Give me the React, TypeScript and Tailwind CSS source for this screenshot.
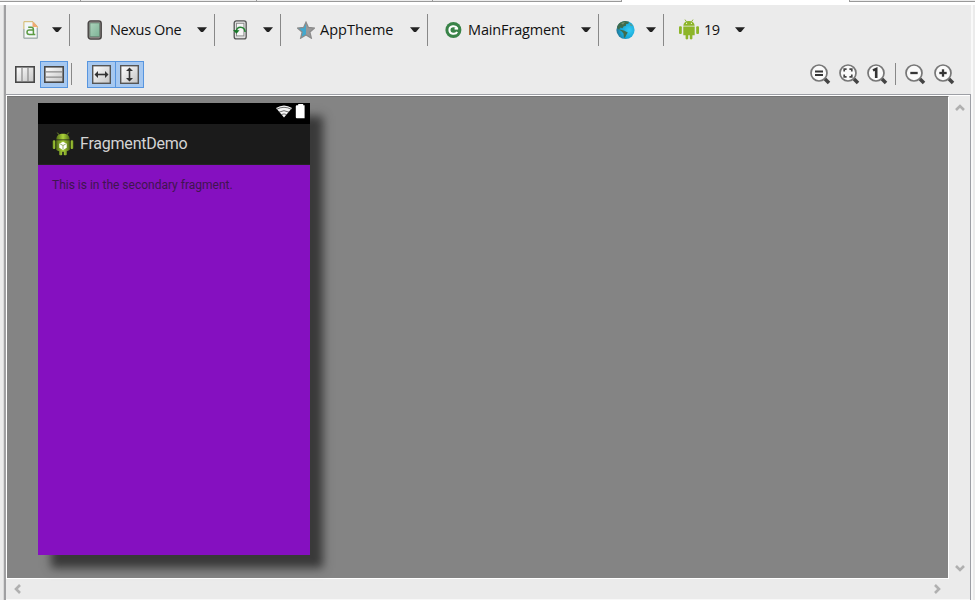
import type { ReactNode } from "react";

function Arrow() {
  return (
    <svg className="ml-auto block shrink-0" width="10" height="6" viewBox="0 0 10 6">
      <path d="M0 .3h10L6 5H4z" fill="#222" />
    </svg>
  );
}

function Cell({ icon, label, className }: { icon: ReactNode; label?: string; className: string }) {
  return (
    <div className={`flex h-8 shrink-0 items-center ${className}`}>
      <span className="shrink-0">{icon}</span>
      {label && <span className="whitespace-nowrap text-[14.5px] leading-5 text-[#111]">{label}</span>}
      <Arrow />
    </div>
  );
}

function FileIcon() {
  return (
    <svg className="block" width="16" height="20" viewBox="0 0 16 20">
      <path d="M.9 1.7H10l4.3 4.6v11.9H.9z" fill="#f2f7fa" stroke="#d3b768" />
      <path d="M.9 9v9.2h13.4V8" fill="none" stroke="#8eabc2" />
      <path d="M9.5 1.5 14.8 7H9.5z" fill="#f0a873" />
      <path d="M5.2 7.2h3q2.2 0 2.2 2.2v5.4M10.4 10.1H6.3q-2.3 0-2.3 2.2t2.3 2.2h6" fill="none" stroke="#5c9b42" strokeWidth="1.5" />
    </svg>
  );
}

function PhoneIcon() {
  return (
    <svg className="block" width="16" height="20" viewBox="0 0 16 20">
      <defs>
        <linearGradient id="screen" x2="1" y2="1">
          <stop stopColor="#add3bc" />
          <stop offset="1" stopColor="#7db496" />
        </linearGradient>
      </defs>
      <rect x="1.2" y=".9" width="13" height="18.2" rx="2.5" fill="#8b8583" stroke="#464342" strokeWidth="1.4" />
      <rect x="3" y="3" width="9.4" height="13.7" fill="url(#screen)" stroke="#628471" strokeWidth=".7" />
    </svg>
  );
}

function RotateIcon() {
  return (
    <svg className="block" width="16" height="20" viewBox="0 0 16 20">
      <rect x="2.2" y=".9" width="12" height="18" rx="2.2" fill="#e0e0e0" stroke="#555" strokeWidth="1.3" />
      <rect x="4.5" y="3.3" width="7.4" height="12.6" fill="#f5f5f5" stroke="#888" strokeWidth=".9" />
      <path d="M4.3 11.5c0-5.8 8.3-5.8 8.8.5" fill="none" stroke="#258333" strokeWidth="1.6" />
      <path d="m1 10 6.5.2-3 3.6z" fill="#167626" />
    </svg>
  );
}

function StarIcon() {
  return (
    <svg className="block" width="18" height="18" viewBox="0 0 18 18">
      <path d="m9 1.2 2.4 5.3 6 .6-4.5 4 1.4 6L9 13.9z" fill="#999" />
      <path d="M9 1.2 6.6 6.5l-6 .6 4.5 4-1.4 6L9 13.9z" fill="#42a8ce" />
      <path d="m9 1.2 2.4 5.3 6 .6-4.5 4 1.4 6L9 13.9l-5.3 3.2 1.4-6-4.5-4 6-.6z" fill="none" stroke="#8b8b8b" strokeWidth="1.3" />
    </svg>
  );
}

function ClassIcon() {
  return (
    <svg className="block" width="17" height="18" viewBox="0 0 17 18">
      <circle cx="8.4" cy="9" r="8" fill="#398348" />
      <path d="M12.1 7.3c-1.2-2.9-7.7-2.9-7.7 1.7s6.5 4.8 7.7 1.8" fill="none" stroke="#fff" strokeWidth="2" />
      <path d="M9.6 6.6h3.5v2H9.6z" fill="#fff" />
    </svg>
  );
}

function GlobeIcon() {
  return (
    <svg className="block" width="19" height="20" viewBox="0 0 19 20">
      <defs>
        <radialGradient id="ocean" cx=".7" cy=".5" r=".7">
          <stop stopColor="#35cdf5" />
          <stop offset=".65" stopColor="#16a4d4" />
          <stop offset="1" stopColor="#247391" />
        </radialGradient>
      </defs>
      <circle cx="9.5" cy="10" r="9.1" fill="url(#ocean)" />
      <path d="M1 8C1.5 4 5 1.3 9 1l4 .8-.7 2-2.1.2-.5 2-2 .2-1.2 2-2.1-.7L3 9.5l5 1.1 3.8 2-1.4 2.1-1.5 3-1-.1-.4-4.1-2-2.3L2 9z" fill="#3f6c4d" />
      <path d="m14 3.4 3 2.7-2.6-.6zM5 3l4-1-2 2.7z" fill="#739173" />
    </svg>
  );
}

function AndroidIcon() {
  return (
    <svg className="block" width="20" height="21" viewBox="0 0 20 21">
      <g fill="#8db529">
        <path d="M4.3 6.7C4.6 3.6 6.4 2 10 2s5.4 1.6 5.7 4.7zM4.3 7.6h11.4v8.7H13.4v3.4q-1.4 1.5-2.6 0v-3.4H9.2v3.4q-1.4 1.5-2.6 0v-3.4H4.3z" />
        <rect y="7.3" width="2.8" height="7.7" rx="1" />
        <rect x="17.2" y="7.3" width="2.8" height="7.7" rx="1" />
      </g>
      <path d="m6 .6 1.5 2.2M14 .6l-1.5 2.2" stroke="#8db529" />
      <path d="M7 4.3h1.1M11.9 4.3H13" stroke="#fff" />
    </svg>
  );
}

function Magnifier({ kind }: { kind: "fit" | "frame" | "one" | "minus" | "plus" }) {
  return (
    <svg className="block shrink-0" width="21" height="21" viewBox="0 0 21 21">
      <path d="m14 14 5 5" stroke="#444" strokeWidth="3.6" />
      <circle cx="9" cy="9" r="8" fill="#fafafa" stroke="#777" strokeWidth="1.7" />
      {kind === "fit" && <path d="M5 7.5h8M5 11h8" stroke="#353535" strokeWidth="2.2" />}
      {kind === "frame" && <path d="M5.2 7.6V5.2h2.4m2.8 0h2.4v2.4m0 2.8v2.4h-2.4m-2.8 0H5.2v-2.4" fill="none" stroke="#444" strokeWidth="1.7" />}
      {kind === "one" && <path d="M6 6.4 9.2 5v9" fill="none" stroke="#333" strokeWidth="2.6" />}
      {(kind === "minus" || kind === "plus") && <path d="M5.3 9h7.4" stroke="#353535" strokeWidth="2.3" />}
      {kind === "plus" && <path d="M9 5.3v7.4" stroke="#353535" strokeWidth="2.3" />}
    </svg>
  );
}

function PanesIcon({ rows = false }: { rows?: boolean }) {
  return (
    <svg className="block" width="20" height="17" viewBox="0 0 20 17">
      <defs>
        <linearGradient id="pane" x2="1" y2="1">
          <stop stopColor="#fff" />
          <stop offset="1" stopColor="#c4c4c4" />
        </linearGradient>
      </defs>
      <rect x=".8" y=".8" width="18.4" height="15.4" fill="url(#pane)" stroke="#484848" strokeWidth="1.6" />
      <path d={rows ? "M2 5.8h16M2 11.2h16" : "M7 2v13M13 2v13"} stroke="#8a8a8a" strokeWidth="1.2" />
    </svg>
  );
}

function StretchIcon({ vertical = false }: { vertical?: boolean }) {
  return (
    <svg className="block" width="19" height="19" viewBox="0 0 19 19">
      <rect x=".7" y=".7" width="17.6" height="17.6" fill="url(#pane)" stroke="#555" strokeWidth="1.4" />
      <g transform={vertical ? "rotate(90 9.5 9.5)" : undefined}>
        <path d="M4 9.5h11" stroke="#333" strokeWidth="1.6" />
        <path d="M2.5 9.5 6 6v7zM16.5 9.5 13 6v7z" fill="#333" />
      </g>
    </svg>
  );
}

function Chevron({ className }: { className: string }) {
  return (
    <svg className={`block ${className}`} width="10" height="8" viewBox="0 0 10 8">
      <path d="m1 6 4-4 4 4" fill="none" stroke="#b0b0b0" strokeWidth="2.6" />
    </svg>
  );
}

function Launcher() {
  return (
    <svg className="block shrink-0" width="22" height="24" viewBox="0 0 22 24">
      <defs>
        <linearGradient id="robot">
          <stop stopColor="#536e16" />
          <stop offset=".5" stopColor="#acd43a" />
          <stop offset="1" stopColor="#526d16" />
        </linearGradient>
      </defs>
      <g fill="url(#robot)">
        <path d="M4.3 7.5C4.5 3.3 7 1.8 11 1.8s6.5 1.5 6.7 5.7zM4.2 8.3h13.6v9.5q-1.8 1.4-3 1.4v3.5q-1.7 1-3 0v-3h-1.6v3q-1.4 1-3 0v-3.5q-1.8 0-3-1.4z" />
        <rect x=".6" y="8.2" width="3" height="8.8" rx="1.3" />
        <rect x="18.4" y="8.2" width="3" height="8.8" rx="1.3" />
      </g>
      <path d="m5.3.6 1.8 2.2M16.7.6l-1.8 2.2" stroke="#718c2c" />
      <path d="m11 9.7 3.7 2v4L11 18l-3.7-2.3v-4z" fill="#fff" />
      <path d="m8.2 12 2.8 1.5 2.8-1.5M11 13.5v3.8" fill="none" stroke="#8aa650" strokeWidth=".9" />
    </svg>
  );
}

function StatusIcons() {
  return (
    <svg className="block" width="31" height="17" viewBox="0 0 31 17">
      <path d="M1 5.1Q9-.1 17 5.1L9 14.4z" fill="#f4f4f4" />
      <path d="M1.5 6.4q7.5-4.2 15 0M3.8 9.2q5.2-3 10.4 0M6.3 11.6q2.7-1.4 5.4 0" fill="none" stroke="#333" strokeWidth=".7" />
      <path d="M21.8 2.3H23.2V1h5v1.3h1.4V15.3h-7.8q-1 0-1-1v-11q0-1 1-1z" fill="#fff" />
    </svg>
  );
}

export default function App() {
  return (
    <div className="flex h-[600px] w-[975px] flex-col overflow-hidden bg-[#ebebeb] font-['Open_Sans','Noto_Sans',sans-serif]">
      <div className="flex h-[5px] shrink-0 items-start bg-white">
        <div className="flex h-[2px] w-[622px] border-b border-[#999] bg-[#ececec]">
          <div className="w-[81px] border-r border-[#999]" />
          <div className="w-[176px] border-r border-[#999]" />
          <div className="w-[176px] border-r border-[#999]" />
          <div className="w-[189px] border-r border-[#999]" />
        </div>
        <div className="ml-auto h-[2px] w-[126px] border-b border-l border-[#999] bg-[#ececec]" />
      </div>

      <div className="flex min-h-0 flex-1">
        <div className="w-[4px] shrink-0 border-r border-[#d9d9d9]" />
        <div className="flex w-[967px] shrink-0 flex-col border-l-2 border-[#a0a0a2]">
          <div className="flex h-[49px] items-center">
            <Cell className="w-[64px] border-r border-[#888] pl-[17px] pr-[7px]" icon={<FileIcon />} />
            <Cell className="w-[145px] gap-[7px] border-r border-[#888] pl-[17px] pr-[7px] tracking-[-0.35px]" icon={<PhoneIcon />} label="Nexus One" />
            <Cell className="w-[66px] border-r border-[#888] pl-[17px] pr-[7px]" icon={<RotateIcon />} />
            <Cell className="w-[147px] gap-[5px] border-r border-[#888] pl-[16px] pr-[7px]" icon={<StarIcon />} label="AppTheme" />
            <Cell className="w-[171px] gap-[6px] border-r border-[#888] pl-[17px] pr-[7px] tracking-[-0.15px]" icon={<ClassIcon />} label="MainFragment" />
            <Cell className="w-[65px] border-r border-[#888] pl-[17px] pr-[7px]" icon={<GlobeIcon />} />
            <Cell className="w-[81px] gap-[5px] pl-[15px] tracking-[-0.6px]" icon={<AndroidIcon />} label="19" />
          </div>

          <div className="flex h-[40px] items-center pl-[9px] pr-[16px]">
            <PanesIcon />
            <div className="ml-[5px] flex h-[27px] w-[28px] items-center justify-center border border-[#5795df] bg-[#a6c8f0]">
              <PanesIcon rows />
            </div>
            <div className="ml-[3px] h-[22px] w-px bg-[#888]" />
            <div className="ml-[15px] flex h-[27px] w-[57px] border border-[#5795df] bg-[#a6c8f0]">
              <div className="flex w-[28px] items-center justify-center border-r border-[#5795df] pr-px"><StretchIcon /></div>
              <div className="flex w-[27px] items-center justify-center"><StretchIcon vertical /></div>
            </div>
            <div className="ml-auto flex items-center">
              <Magnifier kind="fit" />
              <span className="w-[8px]" />
              <Magnifier kind="frame" />
              <span className="w-[7px]" />
              <Magnifier kind="one" />
              <span className="ml-[7px] mr-[9px] h-[22px] w-px bg-[#888]" />
              <Magnifier kind="minus" />
              <span className="w-[8px]" />
              <Magnifier kind="plus" />
            </div>
          </div>

          <div className="flex min-h-0 flex-1 flex-col border-r border-t border-[#9d9fa5]">
            <div className="flex h-[484px] border-l border-t border-white">
              <div className="w-[942px] border-b border-r border-t border-b-white border-r-white border-t-[#747474] bg-[#848484] pl-[31px] pt-[6px]">
                <div className="h-[452px] w-[272px] bg-[#8510c0] shadow-[13px_13px_9px_0px_#393939]">
                  <div className="flex h-[21px] justify-end bg-black pr-[4px]"><StatusIcons /></div>
                  <div className="flex h-[41px] items-center gap-[6px] border-b border-[#242424] bg-[#1b1b1b] pl-[14px] font-[Roboto,sans-serif] text-[16px] tracking-[-0.22px] text-[#d4d4d4]">
                    <Launcher />
                    <span>FragmentDemo</span>
                  </div>
                  <p className="pl-[14px] pt-[11px] font-[Roboto,sans-serif] text-[12px] leading-[18px] text-[#40154f]">This is in the secondary fragment.</p>
                </div>
              </div>
              <div className="flex flex-1 flex-col items-center justify-between pb-[7px] pt-[8px]">
                <Chevron className="" />
                <Chevron className="rotate-180" />
              </div>
            </div>
            <div className="flex flex-1 items-center justify-between border-b border-[#f8f8f8] pl-[7px] pr-[28px]">
              <Chevron className="-rotate-90" />
              <Chevron className="rotate-90" />
            </div>
          </div>
        </div>
        <div className="flex-1 border-l-2 border-[#f9f9f9]" />
      </div>
    </div>
  );
}
